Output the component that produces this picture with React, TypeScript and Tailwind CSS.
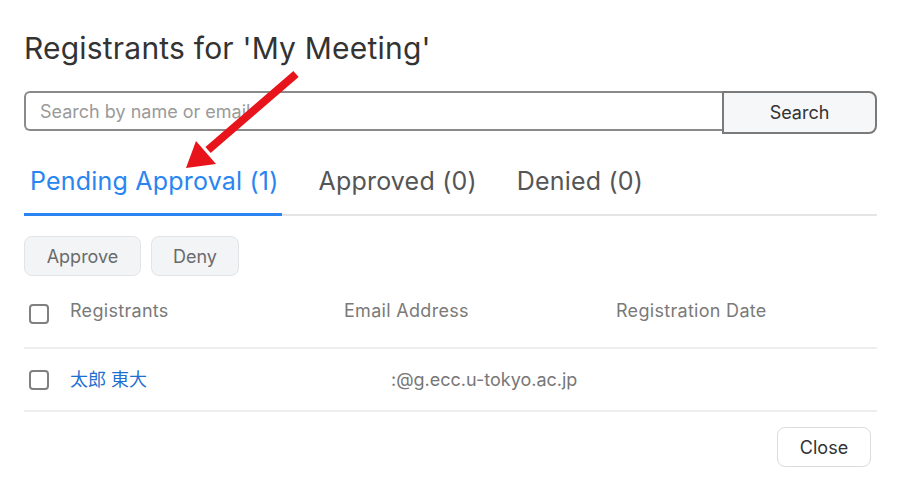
import React from 'react';

const font = { fontFamily: 'Inter, "Noto Sans CJK JP", sans-serif' };

function Checkbox() {
  return <span className="block h-[20px] w-[20px] rounded-[4px] border-2 border-[#808080] bg-white" />;
}

export default function App() {
  return (
    <div className="relative h-[502px] w-[904px] overflow-hidden bg-white" style={font}>
      <div className="ml-[24px] w-[853px] pt-[28px]">
        <h1 className="text-[30px] leading-[40px] tracking-[0.2px] text-[#333]">Registrants for 'My Meeting'</h1>

        <div className="mt-[23px] flex items-start">
          <div className="flex h-[40px] flex-1 items-center rounded-l-[6px] border-2 border-r-0 border-[#8a8a8a] px-[14px] text-[18px] text-[#9a9a9a]">
            Search by name or email
          </div>
          <button className="flex h-[43px] w-[155px] items-center justify-center rounded-r-[8px] border-2 border-[#7a7a7a] bg-[#f6f7f9] text-[18px] text-[#333]">
            Search
          </button>
        </div>

        <div className="mt-[29px] flex border-b-2 border-[#e4e5e7] text-[25px] leading-[36px] tracking-[0.2px]">
          <div className="-mb-[2px] border-b-[3px] border-[#2a85f0] pl-[6px] pr-[3px] pb-[14px] text-[#2a85f0]">
            Pending Approval (1)
          </div>
          <div className="ml-[37px] pb-[14px] text-[#555]">Approved (0)</div>
          <div className="ml-[40px] pb-[14px] text-[#555]">Denied (0)</div>
        </div>

        <div className="mt-[20px] flex gap-[10px] text-[18px]">
          <button className="h-[40px] w-[117px] rounded-[8px] border border-[#e2e4e7] bg-[#f2f4f6] text-[#6b6b6b]">Approve</button>
          <button className="h-[40px] w-[88px] rounded-[8px] border border-[#e2e4e7] bg-[#f2f4f6] text-[#6b6b6b]">Deny</button>
        </div>

        <div className="mt-[16px] flex h-[57px] items-start border-b-2 border-[#eeeeee] text-[18px] leading-[24px] tracking-[0.3px] text-[#7a7a7a]">
          <div className="ml-[5px] mt-[12px]"><Checkbox /></div>
          <div className="ml-[21px] w-[274px] pt-[7px]">Registrants</div>
          <div className="w-[272px] pt-[7px]">Email Address</div>
          <div className="pt-[7px]">Registration Date</div>
        </div>

        <div className="flex h-[63px] items-center border-b-2 border-[#eeeeee] text-[18px]">
          <div className="ml-[5px]"><Checkbox /></div>
          <div className="ml-[21px] w-[321px] text-[#1f6fd1]">太郎 東大</div>
          <div className="text-[#777]">:@g.ecc.u-tokyo.ac.jp</div>
        </div>

        <div className="mt-[15px] flex justify-end pr-[6px]">
          <button className="h-[40px] w-[94px] rounded-[8px] border border-[#dcdcdc] bg-white text-[18px] text-[#333]">Close</button>
        </div>
      </div>

      <svg className="pointer-events-none absolute left-0 top-0" width="904" height="502">
        <line x1="296" y1="74" x2="208" y2="150" stroke="#e8141b" strokeWidth="8" strokeLinecap="butt" />
        <polygon points="186,168 196,141 216,164" fill="#e8141b" />
      </svg>
    </div>
  );
}
